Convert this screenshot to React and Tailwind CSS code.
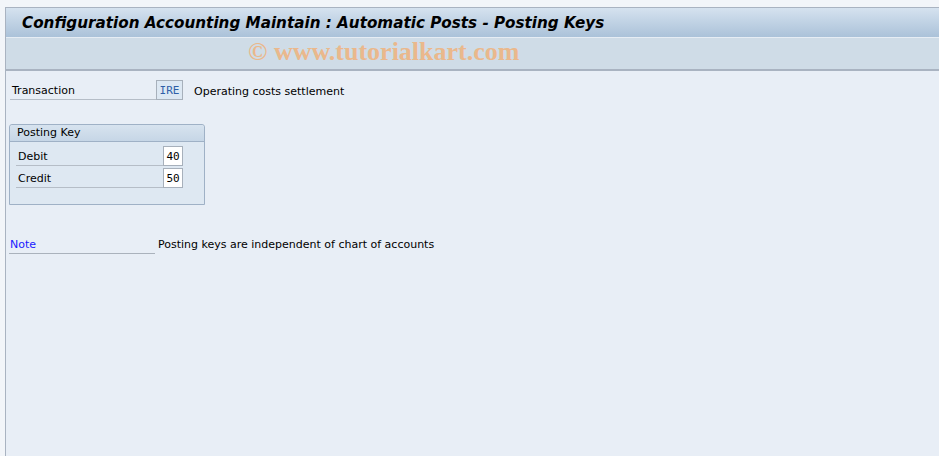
export default function App() {
  const font = { fontFamily: 'Tahoma, "DejaVu Sans", sans-serif' };
  const mono = { fontFamily: '"DejaVu Sans Mono", monospace' };
  return (
    <div className="w-[939px] h-[456px] bg-[#f2f5f9] overflow-hidden flex flex-col" style={font}>
      <div className="h-[7px] shrink-0" />
      <div className="flex-1 flex">
        <div className="w-[5px] shrink-0" />
        <div className="flex-1 flex flex-col border-l border-t border-[#a9b3c1]">
          <div className="h-[30px] shrink-0 bg-gradient-to-b from-[#d5e2ef] to-[#abc2d9] flex items-center pl-[16px] pt-[2px] border-b border-[#e6edf4]">
            <span className="text-[15.2px] font-bold italic text-black" style={{ fontFamily: '"DejaVu Sans", sans-serif' }}>
              Configuration Accounting Maintain : Automatic Posts - Posting Keys
            </span>
          </div>
          <div className="h-[33px] shrink-0 bg-[#cfdce7] border-b-2 border-[#a9b3c1] flex items-center pl-[242px] pb-[4px]">
            <span className="text-[26px] leading-none font-bold text-[#eab88c]" style={{ fontFamily: '"Liberation Serif", serif' }}>
              © www.tutorialkart.com
            </span>
          </div>
          <div className="flex-1 bg-[#e8eef6] text-[11px] text-black">
            <div className="flex items-center mt-[9px] ml-[4px] h-[20px]">
              <div className="w-[146px] h-[20px] border-b border-[#b5bdc7] pl-[2px] pt-[4px] flex items-center">Transaction</div>
              <div className="w-[27px] h-[20px] border border-[#a7b0bb] bg-[#dde8f3] text-[#2f5fa8] flex items-center justify-center text-[11px] pt-[3px]" style={mono}>IRE</div>
              <div className="ml-[11px] pt-[4px]">Operating costs settlement</div>
            </div>
            <div className="ml-[3px] mt-[24px] w-[196px] h-[81px] border border-[#9fb1c6] rounded-t-[3px] bg-[#dee8f2] flex flex-col">
              <div className="h-[17px] bg-gradient-to-b from-[#d7e3ef] to-[#c6d6e6] border-b border-[#9fb1c6] pl-[7px] pt-[1px] flex items-center rounded-t-[3px]">Posting Key</div>
              <div className="flex items-center mt-[4px] ml-[6px] h-[20px]">
                <div className="w-[147px] h-[20px] border-b border-[#b5bdc7] pl-[2px] pt-[4px] flex items-center">Debit</div>
                <div className="w-[20px] h-[20px] border border-[#a7b0bb] bg-white flex items-center justify-center text-[11px] pt-[3px]" style={mono}>40</div>
              </div>
              <div className="flex items-center mt-[2px] ml-[6px] h-[20px]">
                <div className="w-[147px] h-[20px] border-b border-[#b5bdc7] pl-[2px] pt-[4px] flex items-center">Credit</div>
                <div className="w-[20px] h-[20px] border border-[#a7b0bb] bg-white flex items-center justify-center text-[11px] pt-[3px]" style={mono}>50</div>
              </div>
            </div>
            <div className="flex items-center mt-[29px] ml-[3px] h-[20px]">
              <div className="w-[146px] h-[20px] border-b border-[#aab2bc] pl-[1px] pt-[3px] flex items-center text-[#1a1aff]">Note</div>
              <div className="ml-[3px] pt-[3px]">Posting keys are independent of chart of accounts</div>
            </div>
          </div>
        </div>
      </div>
    </div>
  );
}
